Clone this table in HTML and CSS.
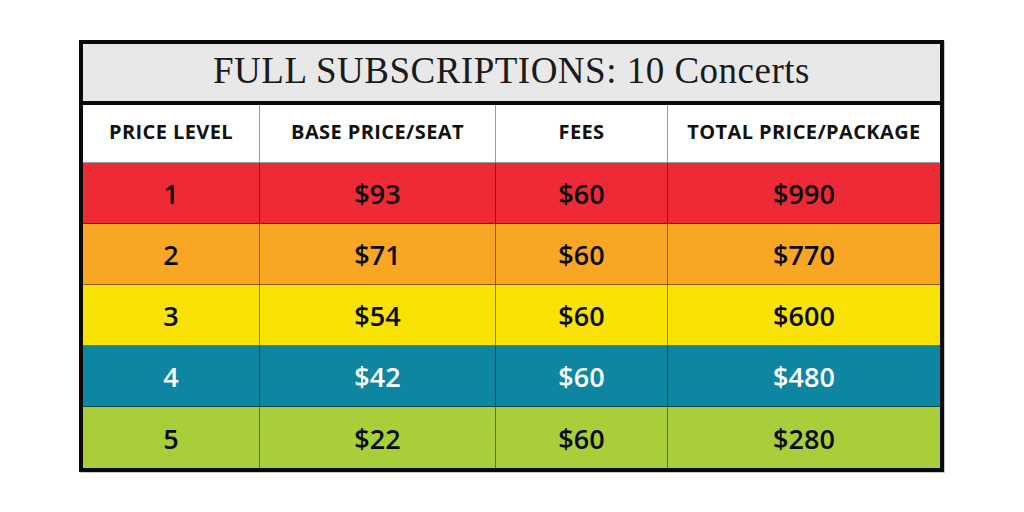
FILE: index.html
```html
<!DOCTYPE html>
<html>
<head>
<meta charset="utf-8">
<link rel="stylesheet" href="styles.css">
</head>
<body>
<div class="page">
  <div class="table">
    <div class="title">FULL SUBSCRIPTIONS: 10 Concerts</div>
    <div class="row head">
      <div class="cell">PRICE LEVEL</div>
      <div class="cell">BASE PRICE/SEAT</div>
      <div class="cell">FEES</div>
      <div class="cell">TOTAL PRICE/PACKAGE</div>
    </div>
    <div class="row data red">
      <div class="cell">1</div><div class="cell">$93</div><div class="cell">$60</div><div class="cell">$990</div>
    </div>
    <div class="row data orange">
      <div class="cell">2</div><div class="cell">$71</div><div class="cell">$60</div><div class="cell">$770</div>
    </div>
    <div class="row data yellow">
      <div class="cell">3</div><div class="cell">$54</div><div class="cell">$60</div><div class="cell">$600</div>
    </div>
    <div class="row data teal">
      <div class="cell">4</div><div class="cell">$42</div><div class="cell">$60</div><div class="cell">$480</div>
    </div>
    <div class="row data green last">
      <div class="cell">5</div><div class="cell">$22</div><div class="cell">$60</div><div class="cell">$280</div>
    </div>
  </div>
</div>
</body>
</html>
```
FILE: styles.css
```css
html, body {
  margin: 0;
  padding: 0;
  background: #ffffff;
}
.page {
  width: 1024px;
  height: 512px;
  padding-top: 40px;
  padding-left: 79px;
  box-sizing: border-box;
}
.table {
  width: 865px;
  height: 432px;
  box-sizing: border-box;
  border: 4px solid #0a0a0a;
  box-shadow: 1px 1px 0 #c8c8c8;
  display: flex;
  flex-direction: column;
}
.title {
  height: 61px;
  flex: none;
  background: #e8e8e8;
  border-bottom: 4px solid #0a0a0a;
  display: flex;
  align-items: center;
  justify-content: center;
  font-family: "Liberation Serif", "DejaVu Serif", serif;
  font-size: 37px;
  letter-spacing: 0.5px;
  color: #1a1a1a;
  padding-bottom: 5px;
  box-sizing: border-box;
}
.row {
  display: grid;
  grid-template-columns: 177px 236px 172px 1fr;
  flex: none;
}
.head {
  height: 58px;
  background: #ffffff;
}
.head .cell {
  font-family: "Open Sans", "Liberation Sans", sans-serif;
  font-weight: 700;
  font-size: 20px;
  letter-spacing: 0.4px;
  color: #111;
  border-right: 1px solid #9a9a9a;
  border-bottom: 1px solid #9a9a9a;
  padding-bottom: 5px;
  box-sizing: border-box;
}
.cell {
  display: flex;
  align-items: center;
  justify-content: center;
}
.cell:last-child {
  border-right: none !important;
}
.data {
  height: 61px;
}
.data .cell {
  font-family: "Open Sans", "Liberation Sans", sans-serif;
  font-weight: 600;
  font-size: 27px;
  color: #0a0a0a;
  border-right: 1px solid rgba(0, 0, 0, 0.45);
  border-bottom: 1px solid rgba(0, 0, 0, 0.45);
  padding-top: 1px;
  box-sizing: border-box;
}
.data.last {
  height: auto;
  flex: 1;
}
.data.last .cell {
  border-bottom: none;
}
.red { background: #ed2a35; }
.orange { background: #f9a625; }
.yellow { background: #f9e206; }
.teal { background: #0e86a1; }
.teal .cell { color: #ffffff !important; }
.green { background: #a8ce3a; }
```
